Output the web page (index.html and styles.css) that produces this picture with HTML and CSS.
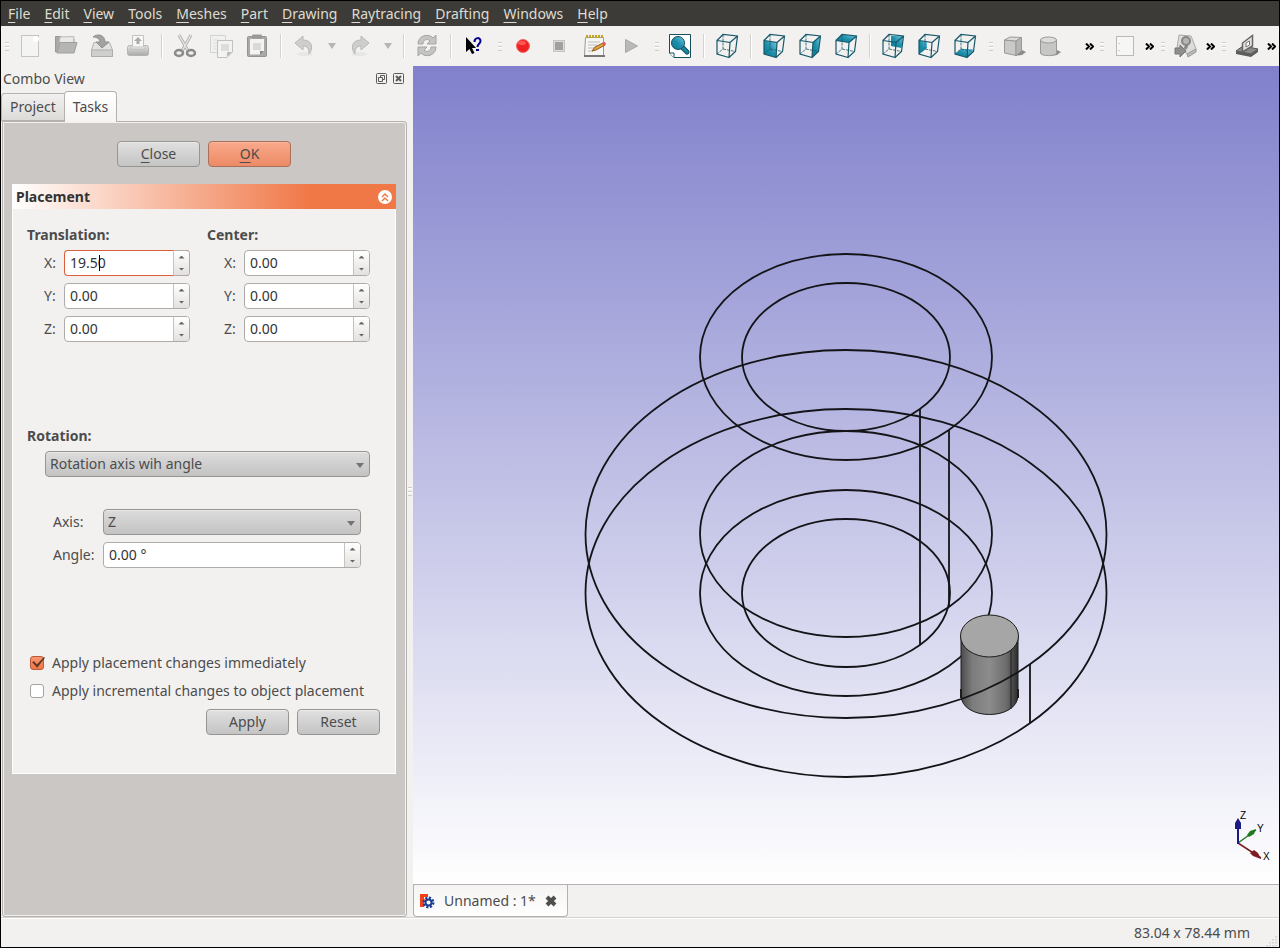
FILE: index.html
```html
<!DOCTYPE html>
<html lang="en">

<head>
  <meta charset="UTF-8" />
  <meta name="viewport" content="width=device-width, initial-scale=1.0" />
  <title>FreeCAD</title>
  <link rel="stylesheet" href="styles.css">
</head>

<body>
  <!-- shared shapes -->
  <svg class="defs" width="0" height="0">
    <defs>
      <linearGradient id="teal" x1="0" y1="1" x2="1" y2="0">
        <stop offset="0" stop-color="#087a95" />
        <stop offset="0.5" stop-color="#1f90ab" />
        <stop offset="1" stop-color="#7ccbe8" />
      </linearGradient>
      <linearGradient id="grey" x1="0" y1="0" x2="0" y2="1">
        <stop offset="0" stop-color="#e4e4e3" />
        <stop offset="1" stop-color="#a9a9a8" />
      </linearGradient>
      <symbol id="wire" viewBox="0 0 24 26">
        <path d="M8 1.500V16L2 21M8 16L20.500 18.500" stroke-dasharray="3 1" stroke-width="0.8" />
        <path d="M2 7.500L15 9.500L14 24.500L2 21ZM2 7.500L8 1.500L22.500 3L20.500 18.500L14 24.500M15 9.500L22.500 3" />
      </symbol>
    </defs>
  </svg>

  <div class="window">
    <nav class="menubar">
      <a href="#"><u>F</u>ile</a>
      <a href="#"><u>E</u>dit</a>
      <a href="#"><u>V</u>iew</a>
      <a href="#"><u>T</u>ools</a>
      <a href="#"><u>M</u>eshes</a>
      <a href="#"><u>P</u>art</a>
      <a href="#"><u>D</u>rawing</a>
      <a href="#"><u>R</u>aytracing</a>
      <a href="#"><u>D</u>rafting</a>
      <a href="#"><u>W</u>indows</a>
      <a href="#"><u>H</u>elp</a>
    </nav>

    <div class="toolbar">
      <!-- file -->
      <div class="group">
        <span class="handle"></span>
        <button class="tool" aria-label="New"><svg width="24" height="24"><rect x="3.500" y="1.500" width="17" height="21" fill="#f4f4f3" stroke="#c4c4c2" /><circle cx="18" cy="5" r="3" fill="#fff" /></svg></button>
        <button class="tool" aria-label="Open"><svg width="24" height="24"><path d="M1.500 18V2.500H7L9 5H20V18Z" fill="#a9aaa8" stroke="#999" /><path d="M6 3L20 2.500L19 12H5Z" fill="#e9e9e8" stroke="#bbb" /><path d="M6 8.500H23L20 19H3Z" fill="#b5b6b4" stroke="#a0a09f" /></svg></button>
        <button class="tool" aria-label="Save"><svg width="24" height="24"><path d="M4 8.500H19.500L22.500 16V22.500H1.500V16Z" fill="#e2e2e1" stroke="#b3b3b2" /><path d="M1.500 16H22.500V22.500H1.500Z" fill="#cfcfce" stroke="#adadac" /><path d="M3 3C8 -1 15 1 15 8H19L12 14L6 8H10C10 5 7 3 3 3Z" fill="#a2a3a1" stroke="#919190" /></svg></button>
        <button class="tool" aria-label="Print"><svg width="24" height="24"><rect x="1.500" y="11.500" width="21" height="10" rx="2" fill="url(#grey)" stroke="#b4b4b3" /><path d="M5 11.500H19V15H5Z" fill="#eee" stroke="#bdbdbb" /><path d="M6.500 1.500H17.500V13H6.500Z" fill="#f7f7f6" stroke="#c2c2c0" /><path d="M12 3L16 7H13.500V10H10.500V7H8Z" fill="#aaa" /></svg></button>
        <span class="sep"></span>
        <button class="tool" aria-label="Cut"><svg width="24" height="24" fill="none"><path d="M6 1L15 17M18 1L9 17" stroke="#aaa" stroke-width="3" /><path d="M6 1L15 17M18 1L9 17" stroke="#e6e6e5" stroke-width="1.500" /><ellipse cx="6" cy="19" rx="4" ry="3" stroke="#8b8b8a" stroke-width="2.500" /><ellipse cx="18" cy="19" rx="4" ry="3" stroke="#8b8b8a" stroke-width="2.500" /></svg></button>
        <button class="tool" aria-label="Copy"><svg width="24" height="24"><path d="M1.500 1.500H16.500V18.500H1.500Z" fill="#f1f1f0" stroke="#d2d2d0" /><path d="M4 6H9M4 9H8M4 12H8M4 15H8" stroke="#ddd" /><path d="M8.500 6.500H23.500V18L18 23.500H8.500Z" fill="#f3f3f2" stroke="#c1c1bf" /><path d="M12 10H20V17H12Z" fill="#ddd" /><path d="M18 23V18H23Z" fill="#bbb" /></svg></button>
        <button class="tool" aria-label="Paste"><svg width="24" height="24"><rect x="2.500" y="2.500" width="19" height="20" rx="1" fill="#a9aaa8" stroke="#939492" /><path d="M5 5H19V17L15 20.500H5Z" fill="#f3f3f2" /><path d="M8 9H16V16H8Z" fill="#d9d9d8" /><path d="M15 21V17H19Z" fill="#888" /><rect x="7" y="0.500" width="10" height="4" rx="1" fill="#999a98" /></svg></button>
        <span class="sep"></span>
        <button class="tool" aria-label="Undo"><svg width="24" height="24"><ellipse cx="13" cy="20" rx="8" ry="2" fill="#e6e6e4" /><path d="M3 9L11 2V6C20 6 22 14 17 20C17 15 16 12 11 12V16Z" fill="#cececc" stroke="#b8b8b6" /></svg></button>
        <button class="drop" aria-label="Undo list"><svg width="10" height="8"><path d="M1 1H9L5 7Z" fill="#b5b5b3" /></svg></button>
        <button class="tool" aria-label="Redo"><svg width="24" height="24"><ellipse cx="11" cy="20" rx="8" ry="2" fill="#e6e6e4" /><path d="M21 9L13 2V6C4 6 2 14 7 20C7 15 8 12 13 12V16Z" fill="#cececc" stroke="#b8b8b6" /></svg></button>
        <button class="drop" aria-label="Redo list"><svg width="10" height="8"><path d="M1 1H9L5 7Z" fill="#b5b5b3" /></svg></button>
        <span class="sep"></span>
        <button class="tool" aria-label="Refresh"><svg width="24" height="24"><path d="M3 10C3 1 14 -1 18 4L21 1V10H12L15 7C12 4 8 6 8 10Z" fill="#c4c4c2" stroke="#a5a5a4" /><path d="M21 13C21 22 10 24 6 19L3 22V13H12L9 16C12 19 16 17 16 13Z" fill="#c4c4c2" stroke="#a5a5a4" /></svg></button>
        <span class="sep"></span>
        <button class="tool" aria-label="What's this"><svg width="24" height="24"><path d="M4 3V18L7.500 15L10 20L12.500 19L10 14H14Z" fill="#000" /><path d="M12.500 8C12.500 3 18.500 3 18.500 7C18.500 10 15.500 9.500 15.500 13" fill="none" stroke="#00008b" stroke-width="2" /><rect x="14" y="15" width="3" height="2" fill="#00008b" /></svg></button>
      </div>

      <!-- macro -->
      <div class="group">
        <span class="handle"></span>
        <button class="tool" aria-label="Record"><svg width="24" height="24"><circle cx="12" cy="12" r="6.500" fill="#ee2222" stroke="#f06a6a" /><ellipse cx="11" cy="9" rx="4" ry="2" fill="#f55" /></svg></button>
        <button class="tool" aria-label="Stop"><svg width="24" height="24"><rect x="6.500" y="6.500" width="11" height="11" fill="#dcdcdb" stroke="#c4c4c3" /><rect x="8" y="8" width="8" height="8" fill="#a0a09f" /></svg></button>
        <button class="tool" aria-label="Macros"><svg width="24" height="24"><path d="M2.500 3.500H20.500V21.500H1.500Z" fill="#f5f5f4" stroke="#999" /><path d="M1 22H22" stroke="#777" stroke-width="2" /><path d="M3 2.500H20" stroke="#c2a423" stroke-width="3" stroke-dasharray="2 1" /><path d="M5 8H17M5 11H14M5 14H11M5 17H10" stroke="#bbb" /><path d="M9 17L12 13L20 9L22 11L13 16Z" fill="#e8a33c" stroke="#8c5a1a" /><path d="M19 9L22 8L23 10L21 12Z" fill="#d55" /></svg></button>
        <button class="tool" aria-label="Run"><svg width="24" height="24"><path d="M6.500 5.500L18.500 12L6.500 18.500Z" fill="#b9bab8" stroke="#a8a9a7" /></svg></button>
      </div>

      <!-- view -->
      <div class="group">
        <span class="handle"></span>
        <button class="tool" aria-label="Fit all"><svg width="24" height="26"><path d="M1.500 1.500H22.500V24.500H6L1.500 20Z" fill="#fff" stroke="#134f5c" stroke-width="1" /><path d="M1.500 20H6V24.500" fill="#fff" stroke="#134f5c" /><path d="M14 14L19 19" stroke="#134f5c" stroke-width="5" stroke-linecap="round" /><path d="M15 15L19 19" stroke="#1b89a5" stroke-width="3" stroke-linecap="round" /><circle cx="10" cy="10" r="6.500" fill="url(#teal)" stroke="#134f5c" /></svg></button>
        <span class="sep"></span>
        <button class="tool cube" aria-label="Axonometric"><svg width="24" height="26"><use href="#wire" /></svg></button>
        <span class="sep"></span>
        <button class="tool cube" aria-label="Front"><svg width="24" height="26"><path class="face" d="M2 7.500L15 9.500L14 24.500L2 21Z" /><use href="#wire" /></svg></button>
        <button class="tool cube" aria-label="Right"><svg width="24" height="26"><path class="face" d="M15 9.500L22.500 3L20.500 18.500L14 24.500Z" /><use href="#wire" /></svg></button>
        <button class="tool cube" aria-label="Top"><svg width="24" height="26"><path class="face" d="M2 7.500L8 1.500L22.500 3L15 9.500Z" /><use href="#wire" /></svg></button>
        <span class="sep"></span>
        <button class="tool cube" aria-label="Rear"><svg width="24" height="26"><path class="face" d="M10 3L22.500 3L20.500 15L10 13Z" /><use href="#wire" /></svg></button>
        <button class="tool cube" aria-label="Left"><svg width="24" height="26"><path class="face" d="M2 7.500L10 8.500V15L2 21Z" /><use href="#wire" /></svg></button>
        <button class="tool cube" aria-label="Bottom"><svg width="24" height="26"><path class="face" d="M2 21L8 16L20.500 16L20.500 18.500L14 24.500Z" /><use href="#wire" /></svg></button>
      </div>

      <!-- part and the overflowing groups -->
      <div class="group">
        <span class="handle"></span>
        <button class="tool" aria-label="Box"><svg width="24" height="24"><path d="M12 22L20 16L24 18L20 21Z" fill="#8b8b8a" /><path d="M2.500 6L14 7V21.500L2.500 19Z" fill="#c9c9c8" stroke="#999" /><path d="M2.500 6L8 3L19.500 3.500L14 7Z" fill="#dcdcdb" stroke="#999" /><path d="M14 7L19.500 3.500V17L14 21.500Z" fill="#b5b5b4" stroke="#999" /></svg></button>
        <button class="tool" aria-label="Cylinder"><svg width="24" height="24"><path d="M12 22L19 16L23 18L19 21Z" fill="#8b8b8a" /><path d="M2.500 6V19C2.500 22.500 18.500 22.500 18.500 19V6Z" fill="#c6c6c5" stroke="#999" /><ellipse cx="10.500" cy="6" rx="8" ry="3" fill="#dcdcdb" stroke="#999" /></svg></button>
        <button class="more wide" aria-label="More"><svg width="9" height="7"><path d="M1 0.500L4 3.500L1 6.500M5 0.500L8 3.500L5 6.500" /></svg></button>
      </div>
      <div class="group">
        <span class="handle"></span>
        <button class="tool" aria-label="Sheet"><svg width="24" height="24"><rect x="3.500" y="2.500" width="17" height="19" fill="#f6f6f5" stroke="#b9b9b8" /><path d="M6 9V10M6 16V17" stroke="#aaa" /></svg></button>
        <button class="more" aria-label="More"><svg width="9" height="7"><path d="M1 0.500L4 3.500L1 6.500M5 0.500L8 3.500L5 6.500" /></svg></button>
      </div>
      <div class="group">
        <span class="handle"></span>
        <button class="tool" aria-label="Raytracing"><svg width="24" height="24"><path d="M5 1L17 2L22 15L14 20L3 14Z" fill="#dcdcdb" stroke="#a9a9a8" /><circle cx="12" cy="7" r="4" fill="#b5b5b4" stroke="#858584" stroke-width="2" /><path d="M13 11L11 15" stroke="#858584" stroke-width="3" /><path d="M1 14H6V11L12 17L6 23V20H1Z" fill="#8e8e8d" stroke="#777" /><path d="M13 20L22 15V18L14 23Z" fill="#bbb" stroke="#999" /></svg></button>
        <button class="more" aria-label="More"><svg width="9" height="7"><path d="M1 0.500L4 3.500L1 6.500M5 0.500L8 3.500L5 6.500" /></svg></button>
      </div>
      <div class="group">
        <span class="handle"></span>
        <button class="tool" aria-label="Drafting"><svg width="24" height="24"><path d="M1 17L8 12L23 15L16 20Z" fill="#8a8a89" stroke="#555" /><path d="M1 17L16 20L23 15V18L16 23L1 20Z" fill="#5c5c5b" /><path d="M7.500 9L17.500 1.500V12L7.500 18Z" fill="#e2e2e1" stroke="#666" stroke-width="1.500" /><path d="M11 9L14.500 7V11L11 13Z" fill="#fff" stroke="#777" /></svg></button>
        <button class="more" aria-label="More"><svg width="9" height="7"><path d="M1 0.500L4 3.500L1 6.500M5 0.500L8 3.500L5 6.500" /></svg></button>
      </div>
    </div>

    <main class="content">
      <aside class="dock">
        <div class="dock_title">
          <span>Combo View</span>
          <div class="dock_buttons">
            <button aria-label="Float"><svg width="11" height="11"><rect x="0.500" y="0.500" width="10" height="10" rx="1" /><path d="M4.500 4V2.500H8.500V6.500H7M2.500 4.500H6.500V8.500H2.500Z" /></svg></button>
            <button aria-label="Close dock"><svg width="11" height="11"><rect x="0.500" y="0.500" width="10" height="10" rx="1" /><path d="M3 3L8 8M8 3L3 8" stroke-width="2" /></svg></button>
          </div>
        </div>

        <div class="tabs">
          <button class="tab">Project</button>
          <button class="tab active">Tasks</button>
        </div>

        <div class="pane">
          <div class="dialog_buttons">
            <button class="btn"><u>C</u>lose</button>
            <button class="btn primary"><u>O</u>K</button>
          </div>

          <section class="task">
            <header class="task_header">
              <h2>Placement</h2>
              <button class="collapse" aria-label="Collapse"><svg width="14" height="14"><circle cx="7" cy="7" r="7" fill="#fff" /><path d="M4 7L7 4L10 7M4 11L7 8L10 11" fill="none" stroke="#f07746" stroke-width="1.500" /></svg></button>
            </header>

            <form class="task_body">
              <div class="vectors">
                <fieldset>
                  <legend>Translation:</legend>
                  <div class="field">
                    <label for="tx">X:</label>
                    <div class="spin focused"><input id="tx" type="text" value="19.50"><span class="caret"></span><span class="steps"><button type="button" aria-label="Up"></button><button type="button" aria-label="Down"></button></span></div>
                  </div>
                  <div class="field">
                    <label for="ty">Y:</label>
                    <div class="spin"><input id="ty" type="text" value="0.00"><span class="steps"><button type="button" aria-label="Up"></button><button type="button" aria-label="Down"></button></span></div>
                  </div>
                  <div class="field">
                    <label for="tz">Z:</label>
                    <div class="spin"><input id="tz" type="text" value="0.00"><span class="steps"><button type="button" aria-label="Up"></button><button type="button" aria-label="Down"></button></span></div>
                  </div>
                </fieldset>
                <fieldset>
                  <legend>Center:</legend>
                  <div class="field">
                    <label for="cx">X:</label>
                    <div class="spin"><input id="cx" type="text" value="0.00"><span class="steps"><button type="button" aria-label="Up"></button><button type="button" aria-label="Down"></button></span></div>
                  </div>
                  <div class="field">
                    <label for="cy">Y:</label>
                    <div class="spin"><input id="cy" type="text" value="0.00"><span class="steps"><button type="button" aria-label="Up"></button><button type="button" aria-label="Down"></button></span></div>
                  </div>
                  <div class="field">
                    <label for="cz">Z:</label>
                    <div class="spin"><input id="cz" type="text" value="0.00"><span class="steps"><button type="button" aria-label="Up"></button><button type="button" aria-label="Down"></button></span></div>
                  </div>
                </fieldset>
              </div>

              <fieldset class="rotation">
                <legend>Rotation:</legend>
                <div class="combo">
                  <select aria-label="Rotation"><option>Rotation axis wih angle</option></select>
                </div>
                <div class="axis">
                  <div class="field">
                    <label for="axis">Axis:</label>
                    <div class="combo"><select id="axis"><option>Z</option></select></div>
                  </div>
                  <div class="field">
                    <label for="angle">Angle:</label>
                    <div class="spin"><input id="angle" type="text" value="0.00 °"><span class="steps"><button type="button" aria-label="Up"></button><button type="button" aria-label="Down"></button></span></div>
                  </div>
                </div>
              </fieldset>

              <div class="checks">
                <label><input type="checkbox" checked>Apply placement changes immediately</label>
                <label><input type="checkbox">Apply incremental changes to object placement</label>
              </div>

              <div class="form_buttons">
                <button type="button" class="btn">Apply</button>
                <button type="button" class="btn">Reset</button>
              </div>
            </form>
          </section>
        </div>
      </aside>

      <div class="splitter"><span class="handle"></span></div>

      <section class="mdi">
        <div class="view">
          <svg class="scene" viewBox="0 0 866 818">
            <defs>
              <linearGradient id="body">
                <stop offset="0" stop-color="#4c4c4c" />
                <stop offset="0.2" stop-color="#7c7c7c" />
                <stop offset="0.5" stop-color="#8c8c8c" />
                <stop offset="0.8" stop-color="#6c6c6c" />
                <stop offset="1" stop-color="#2c2c2c" />
              </linearGradient>
            </defs>
            <g class="edges">
              <ellipse cx="433" cy="291" rx="146" ry="103" />
              <ellipse cx="433" cy="291" rx="104" ry="74" />
              <ellipse cx="433" cy="468" rx="146" ry="103" />
              <ellipse cx="433" cy="527" rx="146" ry="103" />
              <ellipse cx="433" cy="527" rx="104" ry="74" />
              <path d="M507 343V579M536 364V540M617 598V657" />
            </g>
            <path d="M548 570V629A29 21 0 0 0 605 629V570Z" transform="translate(0 1)" fill="url(#body)" />
            <path d="M548 570V629C548 655 605 655 605 629V570" fill="url(#body)" stroke="#1c1c1c" />
            <path d="M598 583V643" stroke="#1c1c1c" />
            <path d="M548 623V632M605 623V632" stroke="#1c1c1c" stroke-width="2" />
            <ellipse cx="576.500" cy="570" rx="29" ry="21" fill="#a6a6a6" stroke="#1c1c1c" />
            <g class="edges">
              <ellipse cx="433" cy="468" rx="260.500" ry="184" />
              <ellipse cx="433" cy="527" rx="260.500" ry="184" />
            </g>
          </svg>

          <svg class="axes" width="36" height="54">
            <path d="M4 33L22 20" stroke="#1f7a1f" stroke-width="1.500" />
            <path d="M13 25L16 21L22 19L20 24L15 27Z" fill="#1f7a1f" />
            <path d="M4 33L27 48" stroke="#7d1c22" stroke-width="1.500" />
            <path d="M16 43L20 40L24 43L27 49L19 46Z" fill="#7d1c22" />
            <path d="M4 34V10" stroke="#1c1c80" stroke-width="2" />
            <path d="M4 8L7 13V19H1V13Z" fill="#1c1c80" />
            <text x="6" y="9">Z</text>
            <text x="23" y="22">Y</text>
            <text x="29" y="50">X</text>
          </svg>
        </div>

        <div class="mdi_tabs">
          <div class="mdi_tab">
            <svg width="16" height="16">
              <path d="M1 1H9V4H5V6H8V9H5V14H1Z" fill="#f0401c" />
              <circle cx="9.500" cy="9.500" r="4.500" fill="#fff" stroke="#1c3f94" stroke-width="3" stroke-dasharray="2 1.500" />
              <circle cx="9.500" cy="9.500" r="3" fill="#fff" stroke="#1c3f94" stroke-width="2" />
            </svg>
            <span>Unnamed : 1*</span>
            <button aria-label="Close document"><svg width="12" height="12"><path d="M2 2L10 10M10 2L2 10" stroke="#4f4f4d" stroke-width="4" /></svg></button>
          </div>
        </div>
      </section>
    </main>

    <footer class="statusbar">
      <span>83.04 x 78.44 mm</span>
      <svg class="grip" width="12" height="12"><path d="M10 1V12M7 4V12M4 7V12M1 10V12" stroke="#cfccc9" stroke-width="1.500" stroke-dasharray="1.500 1.500" /></svg>
    </footer>
  </div>
</body>

</html>
```

FILE: styles.css
```css
* {
  box-sizing: border-box;
}

body {
  margin: 0;
  font-family: "Noto Sans", "Open Sans", sans-serif;
  font-size: 14px;
  line-height: 18px;
  color: #4c4c4c;
}

button,
input,
select {
  font: inherit;
  color: inherit;
  margin: 0;
  padding: 0;
  border: 0;
  background: none;
  outline: none;
}

svg {
  display: block;
}

u {
  text-underline-offset: 3px;
}

.defs {
  position: absolute;
}

.window {
  display: flex;
  flex-direction: column;
  min-height: 100vh;
  border: 1px solid #000;
  background: #f2f1f0;
}

.menubar {
  display: flex;
  gap: 14px;
  height: 25px;
  padding: 4px 7px;
  background: #3c3b37;
}

.menubar a {
  color: #dfdbd2;
  text-decoration: none;
}

/* toolbar */

.toolbar {
  display: flex;
  gap: 2px;
  height: 40px;
  overflow: hidden;
}

.group {
  display: flex;
  flex: none;
  align-items: center;
}

.handle {
  width: 11px;
  height: 9px;
  background: repeating-linear-gradient(#cfccc9 0 1px, #fff 1px 2px, transparent 2px 4px) center / 4px 100% no-repeat;
}

.sep {
  width: 11px;
  height: 24px;
  background: linear-gradient(90deg, #d5d2cf 50%, #fff 50%) center / 2px 100% no-repeat;
}

.tool,
.drop,
.more {
  display: flex;
  align-items: center;
  justify-content: center;
  width: 36px;
  height: 32px;
}

.drop {
  width: 20px;
}

.more {
  width: 12px;
}

.more.wide {
  width: 26px;
  justify-content: flex-end;
}

.more path {
  fill: none;
  stroke: #000;
  stroke-width: 2;
}

.cube svg {
  fill: none;
  stroke: #17586a;
  stroke-width: 1.2;
}

.cube .face {
  fill: url(#teal);
  stroke: none;
}

/* dock */

.content {
  display: flex;
  flex: 1;
}

.dock {
  display: flex;
  flex-direction: column;
  width: 406px;
}

.dock_title {
  display: flex;
  align-items: center;
  justify-content: space-between;
  height: 25px;
  padding: 0 3px 0 2px;
}

.dock_buttons {
  display: flex;
  gap: 6px;
}

.dock_buttons svg {
  fill: none;
  stroke: #5a5a58;
}

.tabs {
  display: flex;
  align-items: flex-end;
  height: 30px;
}

.tab {
  height: 28px;
  padding: 0 8px;
  border: 1px solid #b5b2ae;
  border-right: 0;
  border-radius: 4px 0 0 0;
  background: linear-gradient(#f2f1f0, #dddbd8);
}

.tab.active {
  position: relative;
  height: 31px;
  margin-bottom: -1px;
  border-right: 1px solid #b5b2ae;
  border-bottom: 0;
  border-radius: 4px 4px 0 0;
  background: linear-gradient(#fff, #f5f4f3);
}

.pane {
  flex: 1;
  margin-left: 1px;
  padding: 19px 9px 0 8px;
  border: 1px solid #b5b2ae;
  border-radius: 0 3px 3px 3px;
  background: #cac7c4;
  box-shadow: inset 0 0 0 1px #f2f1f0;
}

.dialog_buttons {
  display: flex;
  justify-content: center;
  gap: 8px;
}

.btn {
  width: 83px;
  height: 26px;
  border: 1px solid #979592;
  border-radius: 4px;
  background: linear-gradient(#e0e0e0, #c4c4c4);
  box-shadow: inset 0 1px #ececec;
}

.btn.primary {
  border-color: #a8705a;
  background: linear-gradient(#f9a98a, #ec8a65);
  box-shadow: inset 0 1px #fbb79d;
}

.task {
  margin: 17px 1px 0;
}

.task_header {
  display: flex;
  align-items: center;
  justify-content: space-between;
  height: 25px;
  padding: 0 4px;
  background: linear-gradient(90deg, #fff, #f07746 78%);
}

.task_header h2 {
  margin: 0;
  font-size: 14px;
  color: #333;
}

.task_body {
  padding: 17px 25px 38px 14px;
  border: 1px solid #fff;
  border-top: 0;
  background: #f2f1f0;
}

fieldset {
  min-width: 0;
  margin: 0;
  padding: 0;
  border: 0;
}

legend {
  height: 24px;
  padding: 0;
  font-weight: bold;
}

.vectors {
  display: grid;
  grid-template-columns: 1fr 1fr;
  gap: 17px;
}

.field {
  display: flex;
  align-items: center;
  height: 26px;
  margin-bottom: 7px;
}

.field:last-child {
  margin-bottom: 0;
}

.vectors .field {
  padding-left: 17px;
}

.vectors label {
  width: 20px;
}

.spin {
  position: relative;
  display: flex;
  flex: 1;
  height: 26px;
  border: 1px solid #aeaba8;
  border-radius: 4px;
  background: #fff;
  overflow: hidden;
}

.spin input {
  flex: 1;
  width: 0;
  padding-left: 5px;
  color: #333;
}

.steps {
  display: flex;
  flex-direction: column;
  width: 16px;
  border-left: 1px solid #c5c2bf;
  background: linear-gradient(#fff, #e3e1df);
}

.steps button {
  flex: 1;
}

.steps button::before {
  content: "";
  display: block;
  width: 6px;
  height: 3px;
  margin: 0 auto;
  background: #666;
  clip-path: polygon(50% 0, 100% 100%, 0 100%);
}

.steps button:last-child::before {
  clip-path: polygon(0 0, 100% 0, 50% 100%);
}

/* the orange outline stops at the step buttons */
.focused {
  border-color: #d9603b #aeaba8 #d9603b #d9603b;
}

.focused .steps {
  margin: -1px 0;
  border-top: 1px solid #aeaba8;
  border-bottom: 1px solid #aeaba8;
}

.focused {
  overflow: visible;
}

.focused .steps {
  border-radius: 0 3px 3px 0;
}

.caret {
  position: absolute;
  top: 4px;
  left: 34px;
  width: 1px;
  height: 16px;
  background: #000;
}

.focused input {
  border-radius: 4px 0 0 4px;
}

.rotation {
  margin-top: 85px;
}

.combo {
  position: relative;
  flex: 1;
}

.combo::after {
  content: "";
  position: absolute;
  top: 12px;
  right: 6px;
  width: 8px;
  height: 5px;
  background: #737373;
  clip-path: polygon(0 0, 100% 0, 50% 100%);
}

.combo select {
  display: block;
  appearance: none;
  width: 100%;
  height: 26px;
  padding-left: 4px;
  border: 1px solid #979592;
  border-radius: 4px;
  background: linear-gradient(#dcdcdc, #c3c3c3);
  box-shadow: inset 0 1px #e8e8e8;
}

.rotation > .combo {
  margin-left: 18px;
}

.axis {
  margin: 32px 9px 0 26px;
}

.axis label {
  width: 50px;
}

.checks {
  display: grid;
  gap: 8px;
  margin: 85px -10px 0 3px;
}

.checks label {
  display: flex;
  align-items: center;
  gap: 8px;
  height: 20px;
  white-space: nowrap;
}

.checks input {
  position: relative;
  appearance: none;
  width: 14px;
  height: 14px;
  border: 1px solid #a5a29f;
  border-radius: 3px;
  background: #fff;
}

.checks input:checked {
  border-color: #b9593a;
  background: linear-gradient(#f9956e, #f07746);
}

.checks input:checked::before {
  content: "";
  position: absolute;
  top: 0;
  left: 1px;
  width: 13px;
  height: 11px;
  background: #5e3527;
  clip-path: polygon(0 45%, 15% 38%, 38% 68%, 92% 0, 100% 6%, 40% 98%);
}

.form_buttons {
  display: flex;
  justify-content: flex-end;
  gap: 8px;
  margin: 8px -10px 0 0;
}

.splitter {
  display: flex;
  align-items: center;
  width: 6px;
}

/* 3d view */

.mdi {
  display: flex;
  flex: 1;
  flex-direction: column;
  min-width: 0;
}

.view {
  position: relative;
  flex: 1;
  border-bottom: 1px solid #b5b2b5;
  background: linear-gradient(#8080cc, #fff);
}

.scene {
  position: absolute;
  width: 100%;
  height: 100%;
}

.edges {
  fill: none;
  stroke: #141418;
  stroke-width: 1.8;
}

.axes {
  position: absolute;
  right: 9px;
  bottom: 20px;
}

.axes text {
  font: 10px "Liberation Sans", sans-serif;
  fill: #000;
}

.mdi_tabs {
  display: flex;
  height: 32px;
}

.mdi_tab {
  display: flex;
  align-items: center;
  gap: 9px;
  height: 32px;
  padding: 0 10px 0 5px;
  border: 1px solid #b5b2ae;
  border-top: 0;
  border-radius: 0 0 4px 4px;
  background: linear-gradient(#f5f4f3, #fff);
}

.statusbar {
  display: flex;
  align-items: center;
  justify-content: flex-end;
  gap: 16px;
  height: 30px;
  border-top: 1px solid #d5d2cf;
  padding-right: 1px;
  box-shadow: inset 0 1px #fff;
}

.grip {
  align-self: flex-end;
}
```
